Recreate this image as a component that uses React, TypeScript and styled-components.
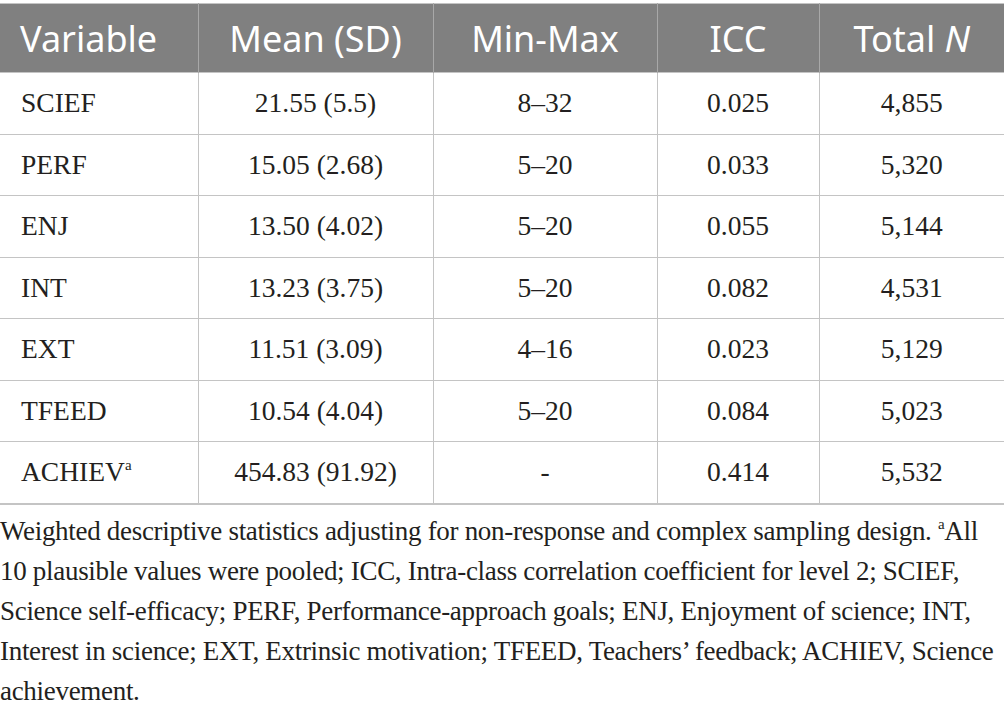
import styled, { createGlobalStyle } from "styled-components";

// -----------------DATA-----------------//
interface Row {
    name: string
    sup?: string
    mean: string
    range: string
    icc: string
    total: string
}

const rows: Row[] = [
    { name: "SCIEF", mean: "21.55 (5.5)", range: "8–32", icc: "0.025", total: "4,855" },
    { name: "PERF", mean: "15.05 (2.68)", range: "5–20", icc: "0.033", total: "5,320" },
    { name: "ENJ", mean: "13.50 (4.02)", range: "5–20", icc: "0.055", total: "5,144" },
    { name: "INT", mean: "13.23 (3.75)", range: "5–20", icc: "0.082", total: "4,531" },
    { name: "EXT", mean: "11.51 (3.09)", range: "4–16", icc: "0.023", total: "5,129" },
    { name: "TFEED", mean: "10.54 (4.04)", range: "5–20", icc: "0.084", total: "5,023" },
    { name: "ACHIEV", sup: "a", mean: "454.83 (91.92)", range: "-", icc: "0.414", total: "5,532" },
]

// -----------------STYLES-----------------//
const GlobalStyle = createGlobalStyle`
    body {
        margin: 0;
        background: #ffffff;
    }
`

const Page = styled.div`
    width: 1004px;
    padding-top: 3px;
`

const Table = styled.table`
    width: 1004px;
    border-collapse: collapse;
    table-layout: fixed;
    border-top: 1px solid #c4c4c4;
    border-bottom: 2px solid #c4c4c4;
`

const HeadCell = styled.th<{ $left?: boolean }>`
    height: 68px;
    padding: ${p => (p.$left ? "0 0 0 20px" : "0")};
    background: #808080;
    color: #ffffff;
    font-family: "Noto Sans", "Open Sans", sans-serif;
    font-weight: 400;
    font-size: 36px;
    text-align: ${p => (p.$left ? "left" : "center")};
    border-left: 1px solid #a8a8a8;
    &:first-child {
        border-left: none;
    }
`

const Cell = styled.td<{ $left?: boolean }>`
    height: 60.5px;
    padding: ${p => (p.$left ? "0 0 0 21px" : "0")};
    color: #231f20;
    font-family: "Liberation Serif", serif;
    font-size: 27.5px;
    text-align: ${p => (p.$left ? "left" : "center")};
    border-left: 1px solid #c4c4c4;
    border-top: 1px solid #c4c4c4;
    &:first-child {
        border-left: none;
    }
`

const Sup = styled.sup`
    font-size: 15px;
    vertical-align: 11px;
    line-height: 0;
`

const Note = styled.p`
    margin: 6px 0 0;
    color: #231f20;
    font-family: "Liberation Serif", serif;
    font-size: 27px;
    line-height: 40px;
    letter-spacing: -0.3px;
`

// -----------------COMPONENT-----------------//
function App() {
    return (
        <Page>
            <GlobalStyle />
            <Table>
                <colgroup>
                    <col style={{ width: 198 }} />
                    <col style={{ width: 235 }} />
                    <col style={{ width: 224 }} />
                    <col style={{ width: 162 }} />
                    <col style={{ width: 185 }} />
                </colgroup>
                <thead>
                    <tr>
                        <HeadCell $left>Variable</HeadCell>
                        <HeadCell>Mean (SD)</HeadCell>
                        <HeadCell>Min-Max</HeadCell>
                        <HeadCell>ICC</HeadCell>
                        <HeadCell>Total <i>N</i></HeadCell>
                    </tr>
                </thead>
                <tbody>
                    {rows.map(r => (
                        <tr key={r.name}>
                            <Cell $left>{r.name}{r.sup && <Sup>{r.sup}</Sup>}</Cell>
                            <Cell>{r.mean}</Cell>
                            <Cell>{r.range}</Cell>
                            <Cell>{r.icc}</Cell>
                            <Cell>{r.total}</Cell>
                        </tr>
                    ))}
                </tbody>
            </Table>
            <Note>
                Weighted descriptive statistics adjusting for non-response and complex sampling design. <Sup>a</Sup>All
                10 plausible values were pooled; ICC, Intra-class correlation coefficient for level 2; SCIEF,
                Science self-efficacy; PERF, Performance-approach goals; ENJ, Enjoyment of science; INT,
                Interest in science; EXT, Extrinsic motivation; TFEED, Teachers’ feedback; ACHIEV, Science
                achievement.
            </Note>
        </Page>
    );
}

export default App
